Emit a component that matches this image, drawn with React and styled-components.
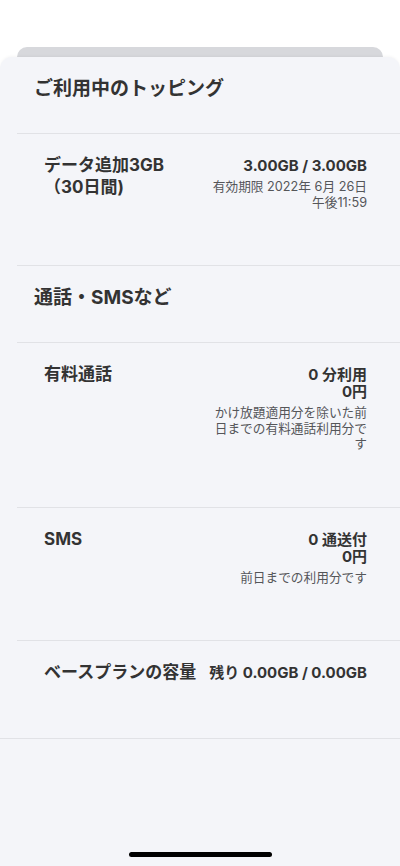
import React from "react";
import styled, { createGlobalStyle } from "styled-components";

const GlobalStyle = createGlobalStyle`
  html, body {
    margin: 0;
    padding: 0;
    background: #ffffff;
  }
  body {
    font-family: Inter, "Noto Sans CJK JP", sans-serif;
    color: #333333;
    -webkit-font-smoothing: antialiased;
  }
`;

const Screen = styled.div`
  width: 400px;
  height: 866px;
  display: flex;
  flex-direction: column;
  padding-top: 47px;
  box-sizing: border-box;
  overflow: hidden;
`;

const BackCard = styled.div`
  height: 10px;
  margin: 0 17px;
  background: #d7d8dc;
  border-radius: 10px 10px 0 0;
  flex-shrink: 0;
`;

const Sheet = styled.div`
  flex: 1;
  display: flex;
  flex-direction: column;
  background: #f4f5f9;
  border-radius: 12px 12px 0 0;
  box-shadow: 0 -1px 3px rgba(0, 0, 0, 0.04);
`;

const List = styled.div`
  flex: 1;
  display: flex;
  flex-direction: column;
`;

const SectionTitle = styled.h2`
  margin: 0;
  padding: 18px 0 30px 34px;
  font-size: 19px;
  line-height: 28px;
  font-weight: 700;
  color: #333333;
`;

const Divider = styled.div`
  height: 1px;
  background: #e1e2e6;
  margin-left: ${(p) => (p.$full ? "0" : "17px")};
`;

const Row = styled.div`
  display: flex;
  justify-content: space-between;
  align-items: flex-start;
  gap: 12px;
  padding: 20px 33px 55px 44px;
`;

const Label = styled.div`
  font-size: 17px;
  line-height: 22px;
  font-weight: 700;
  color: #333333;
  white-space: nowrap;
`;

const Values = styled.div`
  display: flex;
  flex-direction: column;
  align-items: flex-end;
  text-align: right;
  padding-top: 3px;
  max-width: 158px;
`;

const Value = styled.div`
  font-size: 15px;
  line-height: 17px;
  font-weight: 700;
  color: #333333;
  white-space: nowrap;
`;

const Note = styled.div`
  margin-top: 5px;
  font-size: 12.7px;
  line-height: 15.5px;
  font-weight: 400;
  color: #555659;
`;

const HomeBar = styled.div`
  width: 143px;
  height: 5px;
  border-radius: 3px;
  background: #000000;
  margin: 0 auto 9px;
`;

const usage = [
  {
    label: "有料通話",
    values: ["0 分利用", "0円"],
    note: "かけ放題適用分を除いた前日までの有料通話利用分です",
  },
  {
    label: "SMS",
    values: ["0 通送付", "0円"],
    note: "前日までの利用分です",
  },
];

export default function App() {
  return (
    <>
      <GlobalStyle />
      <Screen>
        <BackCard />
        <Sheet>
          <List>
            <SectionTitle>ご利用中のトッピング</SectionTitle>
            <Divider />
            <Row>
              <Label>
                データ追加3GB
                <br />
                （30日間)
              </Label>
              <Values>
                <Value>3.00GB / 3.00GB</Value>
                <Note>
                  有効期限 2022年 6月 26日
                  <br />
                  午後11:59
                </Note>
              </Values>
            </Row>
            <Divider />
            <SectionTitle>通話・SMSなど</SectionTitle>
            {usage.map((item) => (
              <React.Fragment key={item.label}>
                <Divider />
                <Row>
                  <Label>{item.label}</Label>
                  <Values>
                    {item.values.map((v) => (
                      <Value key={v}>{v}</Value>
                    ))}
                    <Note>{item.note}</Note>
                  </Values>
                </Row>
              </React.Fragment>
            ))}
            <Divider />
            <Row>
              <Label>ベースプランの容量</Label>
              <Values>
                <Value>残り 0.00GB / 0.00GB</Value>
              </Values>
            </Row>
            <Divider $full />
          </List>
          <HomeBar />
        </Sheet>
      </Screen>
    </>
  );
}
